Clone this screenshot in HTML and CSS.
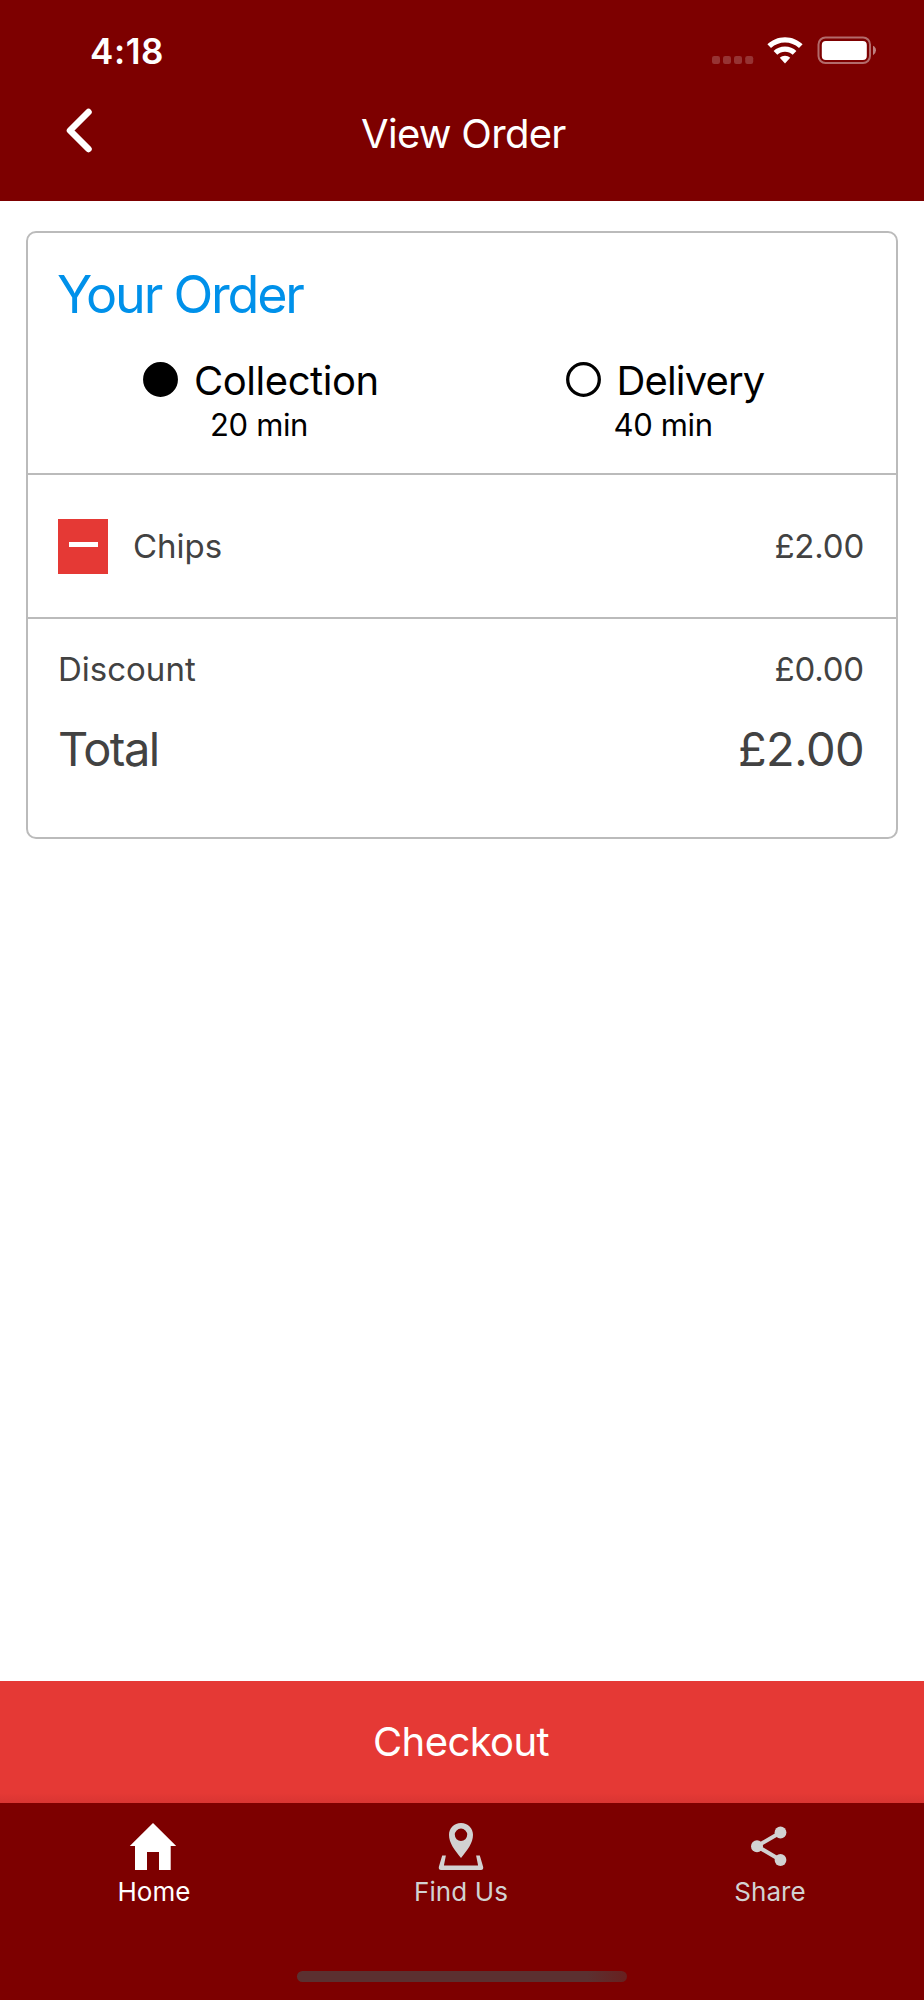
FILE: index.html
```html
<!DOCTYPE html>
<html lang="en">
<head>
<meta charset="utf-8">
<title>View Order</title>
<link rel="stylesheet" href="styles.css">
</head>
<body>
<div class="screen">
  <header class="header">
    <div class="status">
      <span class="clock">4:18</span>
      <div class="indicators">
        <svg class="signal" viewBox="0 0 42 8"><rect width="8" height="8" rx="2.2"/><rect x="11" width="8" height="8" rx="2.2"/><rect x="22" width="8" height="8" rx="2.2"/><rect x="33.2" width="8" height="8" rx="2.2"/></svg>
        <svg class="wifi" viewBox="0 0 36 27"><path d="M18 .2C25 .2 31 3 35.600 7.300L32 11C28 7.400 23.200 5.500 18 5.500S8 7.400 4 11L.4 7.300C5 3 11 .2 18 .2Z"/><path d="M18 9.500C22.500 9.500 26.400 11.200 29.400 14L25.700 17.800C23.600 15.900 21 14.800 18 14.800S12.400 15.900 10.300 17.800L6.600 14C9.600 11.200 13.500 9.500 18 9.500Z"/><path d="M18 18.700C20 18.700 21.900 19.500 23.200 20.800L18 26.500L12.800 20.800C14.100 19.500 16 18.700 18 18.700Z"/></svg>
        <svg class="battery" viewBox="0 0 60 28"><rect x="1.500" y="1.500" width="51.500" height="25.500" rx="7" fill="none" stroke="#fff" stroke-opacity=".42" stroke-width="2"/><rect x="4.800" y="5" width="45" height="19" rx="4" fill="#fff"/><path d="M56 9.800Q59 11.300 59 14.300T56 19.300Z" fill="#fff" fill-opacity=".5"/></svg>
      </div>
    </div>
    <nav class="titlebar">
      <svg class="back" viewBox="0 0 28 46"><path d="M22.500 4L4 22.500L22.500 41"/></svg>
      <h1 class="title">View Order</h1>
    </nav>
  </header>
  <main class="content">
    <section class="card">
      <div class="order">
        <h2 class="heading">Your Order</h2>
        <div class="options">
          <div class="option collection">
            <div class="choice"><svg class="radio selected" viewBox="0 0 35 35"><circle cx="17.500" cy="17.500" r="15.800"/></svg><span class="label">Collection</span></div>
            <div class="time">20 min</div>
          </div>
          <div class="option delivery">
            <div class="choice"><svg class="radio" viewBox="0 0 35 35"><circle cx="17.500" cy="17.500" r="15.800"/></svg><span class="label">Delivery</span></div>
            <div class="time">40 min</div>
          </div>
        </div>
      </div>
      <div class="item">
        <button class="remove" aria-label="Remove"><span class="minus"></span></button>
        <span class="name">Chips</span>
        <span class="price">£2.00</span>
      </div>
      <div class="summary">
        <div class="line"><span class="discount">Discount</span><span class="price">£0.00</span></div>
        <div class="line total"><span class="total-name">Total</span><span class="total-price">£2.00</span></div>
      </div>
    </section>
  </main>
  <button class="checkout"><span class="checkout-text">Checkout</span></button>
  <footer class="footer">
    <nav class="tabs">
      <a class="tab active"><svg class="icon" viewBox="0 0 48 48"><path d="M24 0L47.200 23H41.700V47H30V29H18V47H6V23H.8Z"/></svg><span class="tab-home">Home</span></a>
      <a class="tab"><svg class="icon" viewBox="0 0 48 48"><path fill-rule="evenodd" d="M24 0C17 0 12 5.300 12 11.800C12 20 17.500 27 24 35C30.500 27 36 20 36 11.800C36 5.300 31 0 24 0ZM24 5.600A6.200 6.200 0 1 1 24 18A6.200 6.200 0 1 1 24 5.600Z"/><path d="M5.200 32.600H8.900L6.900 42.500H41.100L39.100 32.600H42.800L46.200 44Q46.500 47 44 47H4Q1.500 47 1.800 44Z"/></svg><span class="tab-find">Find Us</span></a>
      <a class="tab"><svg class="icon" viewBox="0 0 48 48"><path d="M35.500 9.500L12 23.200L35.500 37" fill="none" stroke="currentColor" stroke-width="4"/><circle cx="35.500" cy="9.500" r="5.900"/><circle cx="12" cy="23.200" r="6"/><circle cx="35.500" cy="37" r="5.900"/></svg><span class="tab-share">Share</span></a>
    </nav>
    <div class="home-indicator"></div>
  </footer>
</div>
</body>
</html>
```

FILE: styles.css
```css
* { box-sizing: border-box; }
body { margin: 0; background: #fff; font-family: Inter, "Liberation Sans", sans-serif; }
h1, h2 { margin: 0; font-weight: 400; }
button { border: 0; padding: 0; font-family: inherit; }
svg { display: block; flex: none; }
span { white-space: nowrap; }

.screen { width: 924px; height: 2000px; display: flex; flex-direction: column; }

.header { height: 201px; background: #7d0000; color: #fff; }
.status { height: 100px; padding: 36px 47px 0 90px; display: flex; justify-content: space-between; align-items: flex-start; }
.clock { font-size: 35px; line-height: 30px; font-weight: 600; letter-spacing: .6px; }
.indicators { display: flex; align-items: flex-start; }
.signal { width: 42px; height: 8px; margin-top: 20px; fill: #fff; fill-opacity: .2; }
.wifi { width: 36px; height: 27px; margin: 1px 0 0 13px; fill: #fff; }
.battery { width: 60px; height: 28px; margin-left: 14px; }
.titlebar { padding-left: 66px; display: flex; align-items: flex-start; }
.back { width: 28px; height: 46px; margin-top: 8px; fill: none; stroke: #fff; stroke-width: 6.500; stroke-linecap: round; stroke-linejoin: round; }
.title { margin: 9px 0 0 267px; font-size: 40px; line-height: 50px; letter-spacing: -.7px; }

.content { flex: 1; padding: 30px 26px 0; }
.card { height: 608px; border: 2px solid #bbb; border-radius: 10px; }
.order { height: 242px; border-bottom: 2px solid #bbb; padding: 32px 0 0 29px; }
.heading { font-size: 52px; line-height: 60px; letter-spacing: -2.2px; color: #0091ea; }
.options { display: flex; margin-top: 31px; color: #000; }
.option { width: 422px; }
.choice { display: flex; align-items: flex-start; padding-left: 86px; }
.radio { width: 35px; height: 35px; margin-top: 5.500px; fill: none; stroke: #000; stroke-width: 3.300; }
.selected { fill: #000; }
.label { font-size: 40px; line-height: 50px; margin-left: 16px; letter-spacing: -.45px; }
.time { font-size: 31px; line-height: 40px; padding-left: 153px; margin-top: -1px; letter-spacing: -.35px; }
.delivery .choice { padding-left: 89px; }
.delivery .label { letter-spacing: -.85px; }
.delivery .time { padding-left: 137px; }
.item { height: 144px; border-bottom: 2px solid #bbb; display: flex; align-items: center; padding: 0 32px 0 30px; color: #424242; }
.remove { width: 50px; height: 55px; background: #e53935; display: flex; justify-content: center; padding-top: 23px; }
.minus { width: 29px; height: 5px; background: #fff; }
.name { font-size: 33px; line-height: 40px; margin-left: 25px; }
.price { font-size: 33px; line-height: 40px; margin-left: auto; letter-spacing: -.2px; }
.summary { padding: 30px 32px 0 30px; color: #424242; }
.line { display: flex; }
.discount { font-size: 33px; line-height: 40px; }
.total { margin-top: 30px; }
.total-name, .total-price { font-size: 47px; line-height: 60px; }
.total-name { letter-spacing: -1.5px; }
.total-price { margin-left: auto; letter-spacing: -.6px; }

.checkout { height: 122px; flex: none; color: #fff; background: #e53935; background-image: linear-gradient(transparent 112px, #d93532); }
.checkout-text { font-size: 40px; line-height: 50px; letter-spacing: -.6px; margin-right: 2px; }

.footer { height: 197px; background: #7d0000; padding-top: 20px; }
.tabs { display: grid; grid-template-columns: repeat(3, 308px); margin-left: -1px; }
.tab { display: flex; flex-direction: column; align-items: center; color: #d2d2d2; font-size: 26px; line-height: 30px; letter-spacing: .1px; }
.active { color: #fff; }
.icon { width: 48px; height: 48px; fill: currentColor; margin-bottom: 6px; }
.tab-home, .tab-share { margin-left: 2px; }
.home-indicator { width: 330px; height: 11px; margin: 64px auto 0; border-radius: 6px; background: linear-gradient(90deg, #5b3030 88%, #68201f); }
```
